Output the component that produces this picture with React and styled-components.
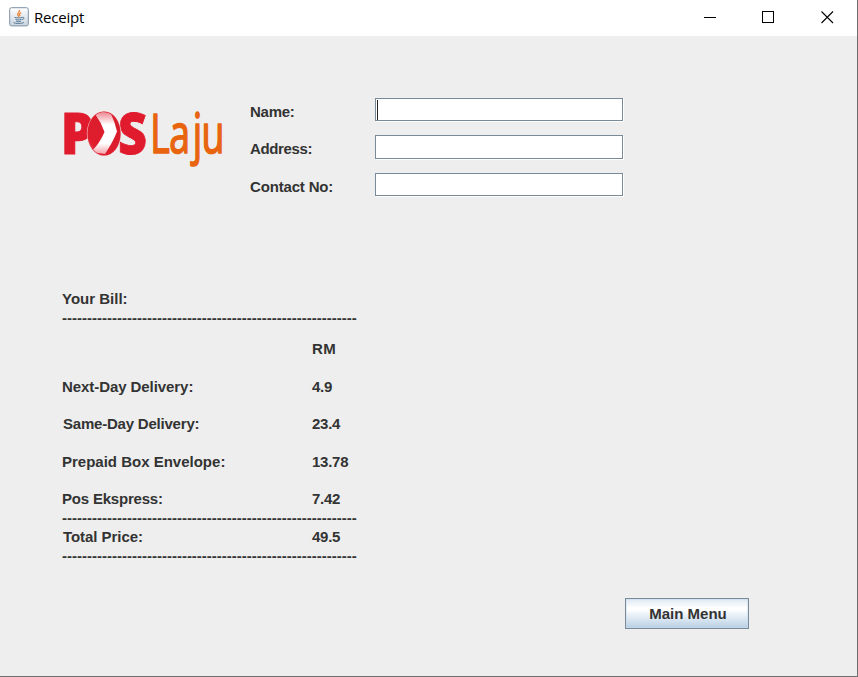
import React from "react";
import styled, { createGlobalStyle } from "styled-components";

const GlobalStyle = createGlobalStyle`
  * { box-sizing: border-box; }
  body { margin: 0; overflow: hidden; background: #eee; }
`;

const Window = styled.div`
  display: flex;
  flex-direction: column;
  width: 858px;
  height: 677px;
  background: #eee;
  border-right: 1px solid #6e6e6e;
  border-bottom: 1px solid #6e6e6e;
  color: #333;
  font: bold 15px/19px "Liberation Sans", Arial, sans-serif;
`;

const TitleBar = styled.header`
  display: flex;
  align-items: center;
  flex: none;
  height: 36px;
  padding: 0 0 2px 9px;
  background: #fff;
  color: #000;
`;

const Title = styled.h1`
  flex: 1;
  margin: 0 0 1px 5px;
  font: 400 15px/20px "Open Sans", "Noto Sans", sans-serif;
  letter-spacing: -0.2px;
`;

const WindowButton = styled.button`
  display: flex;
  align-items: center;
  justify-content: center;
  width: 58.5px;
  height: 34px;
  padding: 0;
  border: 0;
  background: none;
`;

const Header = styled.section`
  display: flex;
  align-items: flex-start;
  height: 158px;
  margin: 61px 0 0 62px;
`;

const Logo = styled.svg`
  flex: none;
  width: 188px;
  height: 80px;
  overflow: visible;
`;

const Form = styled.form`
  display: flex;
  flex-direction: column;
  padding-top: 1px;
`;

const Field = styled.label`
  display: flex;
  align-items: flex-start;
  height: ${(p) => p.$height}px;
`;

const FieldName = styled.span`
  width: 125px;
  padding-top: 4px;
  letter-spacing: ${(p) => p.$tracking || 0}px;
`;

const Input = styled.input`
  width: 248px;
  height: ${(p) => p.$height}px;
  padding: 0 3px;
  border: 1px solid #7a8a99;
  border-radius: 0;
  outline: 0;
  background: #fff;
  box-shadow: 1px 1px 0 #fff;
  font: 15px "Liberation Sans", Arial, sans-serif;
`;

const Caret = styled.span`
  width: 1px;
  height: 20px;
  margin: 2px -3px 0 2px;
  position: relative;
  z-index: 1;
  background: #222;
`;

const Bill = styled.section`
  display: flex;
  flex-direction: column;
  width: 330px;
  margin: 34px 0 0 62px;
`;

const BillRow = styled.div`
  display: flex;
  height: 19px;
  margin-top: ${(p) => p.$gap || 0}px;
`;

const ItemName = styled.span`
  width: 250px;
  padding-left: ${(p) => p.$inset || 0}px;
  letter-spacing: ${(p) => p.$tracking || 0}px;
`;

const Amount = styled.span`
  letter-spacing: ${(p) => p.$tracking ?? -0.25}px;
`;

const Dashes = styled.div`
  height: 19px;
  white-space: nowrap;
`;

const MenuButton = styled.button`
  align-self: flex-end;
  width: 124px;
  height: 31px;
  margin: 33px 108px 0 0;
  padding: 0 0 0 2px;
  border: 1px solid #7a8a99;
  background: linear-gradient(#dde8f3 0%, #fff 30%, #fff 36%, #b8cfe5 100%);
  box-shadow: inset 0 0 0 1px rgba(200, 218, 236, 0.5);
  color: #333;
  font: inherit;
`;

const line = "-".repeat(59);

function JavaIcon() {
  return (
    <svg width="20" height="20" viewBox="0 0 20 20" fill="none">
      <defs>
        <linearGradient id="java" x2="0" y2="1">
          <stop stopColor="#fff" />
          <stop offset="1" stopColor="#c9d4df" />
        </linearGradient>
      </defs>
      <rect x=".7" y=".7" width="18.6" height="18.2" rx="1.8" fill="url(#java)" stroke="#7f92a5" />
      <path d="M10.4 3c1 2-3 3-1.5 5.2L10 10M12.2 5.6C9.6 7 10.2 7.6 11 9" stroke="#ed8b43" strokeWidth="1.4" />
      <path d="M5.5 10.4c1.5.7 6 .7 7.7 0M6.5 12.4c1.6.8 4.3.8 6 0M7.2 14.2c1.3.6 3.3.6 4.7 0M13.3 10.4c2.5-.5 2 1.8-.2 2.2M4.8 15.2c-1 1.3 7.4 1.8 10 .3" stroke="#537593" />
    </svg>
  );
}

function PosLajuLogo() {
  return (
    <Logo viewBox="0 0 188 80" role="img" aria-label="POS Laju">
      <defs>
        <linearGradient id="shine" x1="0" y1="1" x2="1" y2="0">
          <stop stopColor="#e8606e" />
          <stop offset=".22" stopColor="#e01e2d" />
          <stop offset=".8" stopColor="#d81c2c" />
          <stop offset="1" stopColor="#e44a57" />
        </linearGradient>
        <linearGradient id="chevron" x1="0" y1="0" x2="0" y2="1">
          <stop stopColor="#ee8791" />
          <stop offset=".3" stopColor="#fff" />
          <stop offset=".75" stopColor="#fff" />
          <stop offset="1" stopColor="#f3a0a8" />
        </linearGradient>
        <clipPath id="ball"><ellipse cx="42" cy="36.5" rx="16.2" ry="21.7" /></clipPath>
      </defs>
      <g fill="#e01b2d" stroke="#e01b2d" strokeWidth=".8" fontFamily="Open Sans" fontWeight="800" fontSize="57">
        <text transform="translate(-1.2 56.7) scale(.92 1)">P</text>
        <text transform="translate(56 56.7) scale(.88 1)">S</text>
      </g>
      <ellipse cx="42" cy="36.5" rx="17.2" ry="22.4" fill="#f3c5c9" />
      <ellipse cx="42" cy="36.5" rx="16.6" ry="22.1" fill="url(#shine)" />
      <g clipPath="url(#ball)">
        <path
          d="M33 17Q41 13 49 17Q53 25 55 34.5Q51 45 43 57L29 55Q38 46 42.5 35Q39 25 33 17Z"
          fill="url(#chevron)"
        />
      </g>
      <text
        transform="translate(88.2 56) scale(.68 1)"
        x="0 28.2 62.7 75.5"
        fill="#e8640f"
        stroke="#e8640f"
        strokeWidth="1.7"
        strokeLinejoin="round"
        fontFamily="Open Sans"
        fontWeight="400"
        fontSize="55"
      >
        Laju
      </text>
    </Logo>
  );
}

export default function App() {
  return (
    <>
      <GlobalStyle />
      <Window>
        <TitleBar>
          <JavaIcon />
          <Title>Receipt</Title>
          <WindowButton aria-label="Minimize">
            <svg width="13" height="13" stroke="#000"><path d="M0 6.5h12" /></svg>
          </WindowButton>
          <WindowButton aria-label="Maximize">
            <svg width="15" height="13" stroke="#000" fill="none"><rect x=".5" y=".5" width="11" height="11" /></svg>
          </WindowButton>
          <WindowButton aria-label="Close">
            <svg width="13" height="13" stroke="#000" strokeWidth="1.1"><path d="M.5.5l11.5 11.5M12 .5l-11.5 11.5" /></svg>
          </WindowButton>
        </TitleBar>
        <Header>
          <PosLajuLogo />
          <Form>
            <Field $height={37}>
              <FieldName $tracking={-0.25}>Name:</FieldName>
              <Caret />
              <Input $height={23} />
            </Field>
            <Field $height={38}>
              <FieldName $tracking={-0.35}>Address:</FieldName>
              <Input $height={24} />
            </Field>
            <Field $height={37}>
              <FieldName $tracking={-0.17}>Contact No:</FieldName>
              <Input $height={23} />
            </Field>
          </Form>
        </Header>
        <Bill>
          <BillRow>Your Bill:</BillRow>
          <Dashes>{line}</Dashes>
          <BillRow $gap={12}><ItemName /><Amount $tracking={0.4}>RM</Amount></BillRow>
          <BillRow $gap={19}><ItemName $tracking={-0.07}>Next-Day Delivery:</ItemName><Amount>4.9</Amount></BillRow>
          <BillRow $gap={18}><ItemName $inset={1} $tracking={-0.21}>Same-Day Delivery:</ItemName><Amount>23.4</Amount></BillRow>
          <BillRow $gap={19}><ItemName>Prepaid Box Envelope:</ItemName><Amount>13.78</Amount></BillRow>
          <BillRow $gap={18}><ItemName $tracking={-0.2}>Pos Ekspress:</ItemName><Amount>7.42</Amount></BillRow>
          <Dashes>{line}</Dashes>
          <BillRow><ItemName $inset={1} $tracking={-0.05}>Total Price:</ItemName><Amount>49.5</Amount></BillRow>
          <Dashes>{line}</Dashes>
        </Bill>
        <MenuButton>Main Menu</MenuButton>
      </Window>
    </>
  );
}
